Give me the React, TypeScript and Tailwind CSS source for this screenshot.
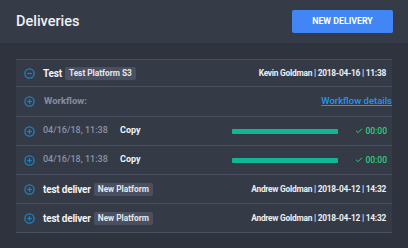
import { Check } from "lucide-react";

function CircleIcon({ minus = false }: { minus?: boolean }) {
  return (
    <svg width="11" height="11" viewBox="0 0 11 11" className="shrink-0">
      <circle cx="5.5" cy="5.5" r="4.6" fill="none" stroke="#1a84c4" strokeWidth="1.3" />
      <line x1="3.2" y1="5.5" x2="7.8" y2="5.5" stroke="#1a84c4" strokeWidth="1.3" />
      {!minus && <line x1="5.5" y1="3.2" x2="5.5" y2="7.8" stroke="#1a84c4" strokeWidth="1.3" />}
    </svg>
  );
}

function Badge({ label }: { label: string }) {
  return (
    <span className="ml-[3px] rounded-[2px] bg-[#4a5060] px-[4px] py-[2px] text-[8.3px] font-bold leading-[9px] text-[#e6e8ec]">
      {label}
    </span>
  );
}

function DeliveryRow({ name, badge, meta, minus = false, h = "h-[29px]" }: { name: string; badge: string; meta: string; minus?: boolean; h?: string }) {
  return (
    <div className={`flex ${h} items-center border-b border-[#4a5061] pl-[8px] pr-[6px]`}>
      <CircleIcon minus={minus} />
      <span className="ml-[8px] text-[10px] font-bold tracking-[-0.02em] text-[#f2f3f5]">{name}</span>
      <Badge label={badge} />
      <span className="ml-auto text-[8.4px] font-bold tracking-[-0.03em] text-[#eceef1]">{meta}</span>
    </div>
  );
}

function StepRow() {
  return (
    <div className="flex h-[29px] items-center border-b border-[#4a5061] pl-[8px] pr-[5px]">
      <CircleIcon />
      <span className="ml-[8px] w-[77px] text-[9px] font-medium text-[#8a93a5]">04/16/18, 11:38</span>
      <span className="text-[9px] font-bold text-[#f2f3f5]">Copy</span>
      <div className="ml-[91px] h-[5px] w-[106px] rounded-[1px] bg-[#11b795]" />
      <div className="ml-auto flex items-center gap-[2px] text-[#2fd07a]">
        <Check size={8} strokeWidth={3} />
        <span className="text-[8.5px] font-medium">00:00</span>
      </div>
    </div>
  );
}

export default function App() {
  return (
    <div className="h-[248px] w-[408px] overflow-hidden bg-[#2e333e]" style={{ fontFamily: "Roboto, 'Liberation Sans', sans-serif" }}>
      <header className="flex h-[43px] items-center justify-between bg-[#363b48] pl-[16px] pr-[15px]">
        <h1 className="text-[14.5px] font-medium text-[#eef0f3]">Deliveries</h1>
        <button className="h-[23px] w-[101px] rounded-[2px] bg-[#4285f4] text-[8.8px] font-bold text-white">
          NEW DELIVERY
        </button>
      </header>
      <div className="mx-[16px] mt-[16px] border-t border-[#4a5061] bg-[#353a47]">
        <DeliveryRow name="Test" badge="Test Platform S3" meta="Kevin Goldman | 2018-04-16 | 11:38" minus h="h-[27px]" />
        <div className="flex h-[30px] items-center border-b border-[#4a5061] pl-[8px]">
          <CircleIcon />
          <span className="ml-[9px] text-[9.5px] font-bold text-[#858ea1]">Workflow:</span>
          <a className="ml-auto text-[9.5px] font-medium text-[#2196f3] underline">Workflow details</a>
        </div>
        <StepRow />
        <StepRow />
        <DeliveryRow name="test deliver" badge="New Platform" meta="Andrew Goldman | 2018-04-12 | 14:32" />
        <DeliveryRow name="test deliver" badge="New Platform" meta="Andrew Goldman | 2018-04-12 | 14:32" />
      </div>
    </div>
  );
}
